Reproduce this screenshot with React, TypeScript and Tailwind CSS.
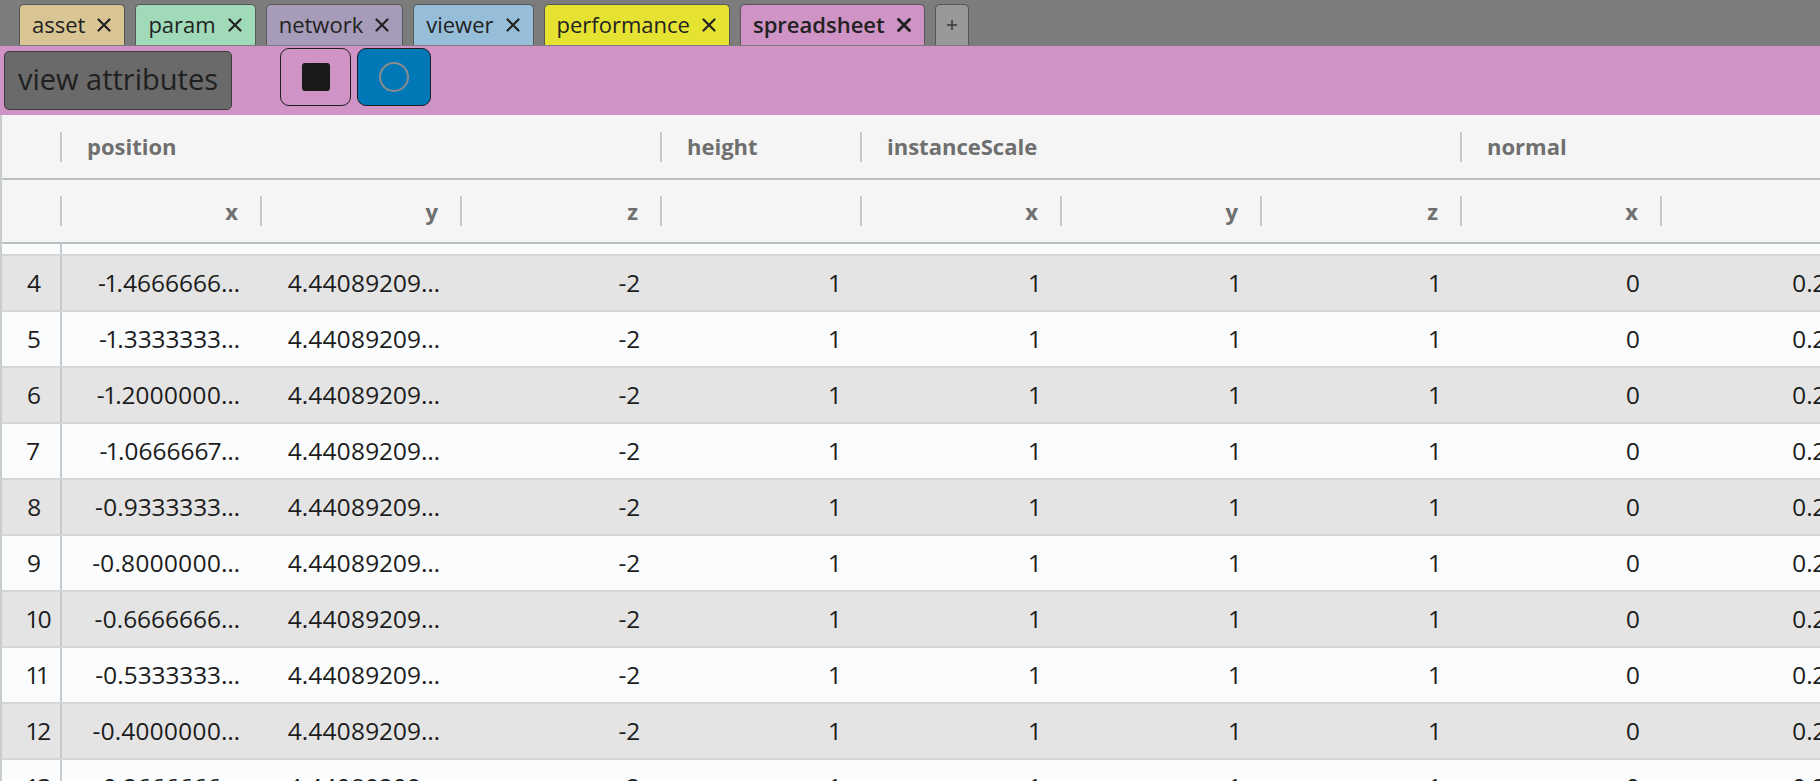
const tabs = [
  { name: "asset", bg: "bg-[#d9c494]" },
  { name: "param", bg: "bg-[#a0dab9]" },
  { name: "network", bg: "bg-[#a69bb8]" },
  { name: "viewer", bg: "bg-[#96bed8]" },
  { name: "performance", bg: "bg-[#e6e232]" },
  { name: "spreadsheet", bg: "bg-[#cf93c5]", active: true },
];

const xs: Record<number, string> = {
  3: "-1.6000000…",
  4: "-1.4666666…",
  5: "-1.3333333…",
  6: "-1.2000000…",
  7: "-1.0666667…",
  8: "-0.9333333…",
  9: "-0.8000000…",
  10: "-0.6666666…",
  11: "-0.5333333…",
  12: "-0.4000000…",
  13: "-0.2666666…",
};

const rows = [3, 4, 5, 6, 7, 8, 9, 10, 11, 12, 13];

function CloseIcon({ bold }: { bold?: boolean }) {
  return (
    <svg width="14" height="14" viewBox="0 0 14 14" className="shrink-0">
      <path d="M1.5 1.5 L12.5 12.5 M12.5 1.5 L1.5 12.5" stroke="#222" strokeWidth={bold ? 2.9 : 2.2} strokeLinecap="round" />
    </svg>
  );
}

function Sep() {
  return <div className="w-[2px] h-[30px] bg-[#c3c8c9] shrink-0" />;
}

function SubHead({ label }: { label: string }) {
  return (
    <div className="w-[200px] shrink-0 flex items-center justify-end">
      {label && <span>{label}</span>}
      <div className="ml-[22px]">
        <Sep />
      </div>
    </div>
  );
}

function GroupHead({ label, width }: { label: string; width: string }) {
  return (
    <div className={`${width} shrink-0 flex items-center`}>
      <span className="flex-1 pl-[25px]">{label}</span>
      <Sep />
    </div>
  );
}

export default function App() {
  return (
    <div className="w-[1820px] h-[781px] overflow-hidden flex flex-col bg-[#7c7c7c] font-['Open_Sans',sans-serif]">
      {/* tab strip */}
      <div className="h-[46px] flex items-end gap-[10px] pl-[19px] shrink-0">
        {tabs.map((t) => (
          <div
            key={t.name}
            className={`h-[41px] mb-[1px] flex items-center gap-[12px] pl-3 pr-[13px] rounded-t-[5px] border border-b-0 border-[#575757] text-[22px] text-[#222] ${t.bg} ${t.active ? "font-semibold" : ""}`}
          >
            <span className="leading-none -mt-[2px]">{t.name}</span>
            <CloseIcon bold={t.active} />
          </div>
        ))}
        <div className="h-[41px] mb-[1px] w-[34px] flex items-center justify-center rounded-t-[5px] border border-b-0 border-[#575757] bg-[#989898]">
          <svg width="12" height="12" viewBox="0 0 12 12">
            <path d="M6 1 V11 M1 6 H11" stroke="#333" strokeWidth="1.4" />
          </svg>
        </div>
      </div>

      {/* toolbar */}
      <div className="h-[69px] shrink-0 bg-[#cf93c5] flex items-center pl-1">
        <button className="h-[59px] w-[228px] rounded-[5px] border border-[#3c3c3c] bg-[#6a6a6a] text-[29px] text-[#202020] flex items-center justify-center">
          <span className="-mt-[3px]">view attributes</span>
        </button>
        <div className="flex gap-[6px] ml-[48px] mb-[7px]">
          <button className="w-[71px] h-[58px] rounded-[9px] border-[1.5px] border-[#1e1e1e] flex items-center justify-center">
            <div className="w-[28px] h-[28px] rounded-[3px] bg-[#1a1a1a]" />
          </button>
          <button className="w-[74px] h-[58px] rounded-[9px] border-[1.5px] border-[#1e1e1e] bg-[#0077b6] flex items-center justify-center">
            <svg width="34" height="34" viewBox="0 0 34 34">
              <circle cx="17" cy="17" r="14" fill="none" stroke="#8c8c8c" strokeWidth="2" />
            </svg>
          </button>
        </div>
      </div>

      {/* spreadsheet */}
      <div className="flex-1 bg-[#fbfcfd] border-l-2 border-[#c8cdce] overflow-hidden flex flex-col">
        <div className="bg-[#f4f5f4] text-[22px] font-bold text-[#6f6f6f] shrink-0">
          <div className="h-[65px] flex border-b-2 border-[#b9c0c1]">
            <div className="w-[60px] shrink-0 flex items-center justify-end">
              <Sep />
            </div>
            <GroupHead label="position" width="w-[600px]" />
            <GroupHead label="height" width="w-[200px]" />
            <GroupHead label="instanceScale" width="w-[600px]" />
            <GroupHead label="normal" width="w-[600px]" />
          </div>
          <div className="h-[64px] flex border-b-2 border-[#b9c0c1]">
            <div className="w-[60px] shrink-0 flex items-center justify-end">
              <Sep />
            </div>
            <SubHead label="x" />
            <SubHead label="y" />
            <SubHead label="z" />
            <SubHead label="" />
            <SubHead label="x" />
            <SubHead label="y" />
            <SubHead label="z" />
            <SubHead label="x" />
            <SubHead label="y" />
            <SubHead label="z" />
          </div>
        </div>

        <div className="flex-1 overflow-hidden">
          <div className="-mt-[44px] text-[24.5px] proportional-nums text-[#1c1c1c]">
            {rows.map((n) => {
              const cells = [xs[n], "4.44089209…", "-2", "1", "1", "1", "1", "0", "0.25", "0"];
              return (
                <div
                  key={n}
                  className={`h-[56px] flex border-b-2 border-[#d4d6d7] ${n % 2 === 0 ? "bg-[#e4e4e4]" : "bg-[#fbfcfd]"}`}
                >
                  <div className="w-[60px] shrink-0 flex items-center pl-[25px] border-r-2 border-[#c5cacc]">
                    {n}
                  </div>
                  {cells.map((c, i) => (
                    <div key={i} className="w-[200px] shrink-0 flex items-center justify-end pr-[22px] whitespace-nowrap">
                      {c}
                    </div>
                  ))}
                </div>
              );
            })}
          </div>
        </div>
      </div>
    </div>
  );
}
